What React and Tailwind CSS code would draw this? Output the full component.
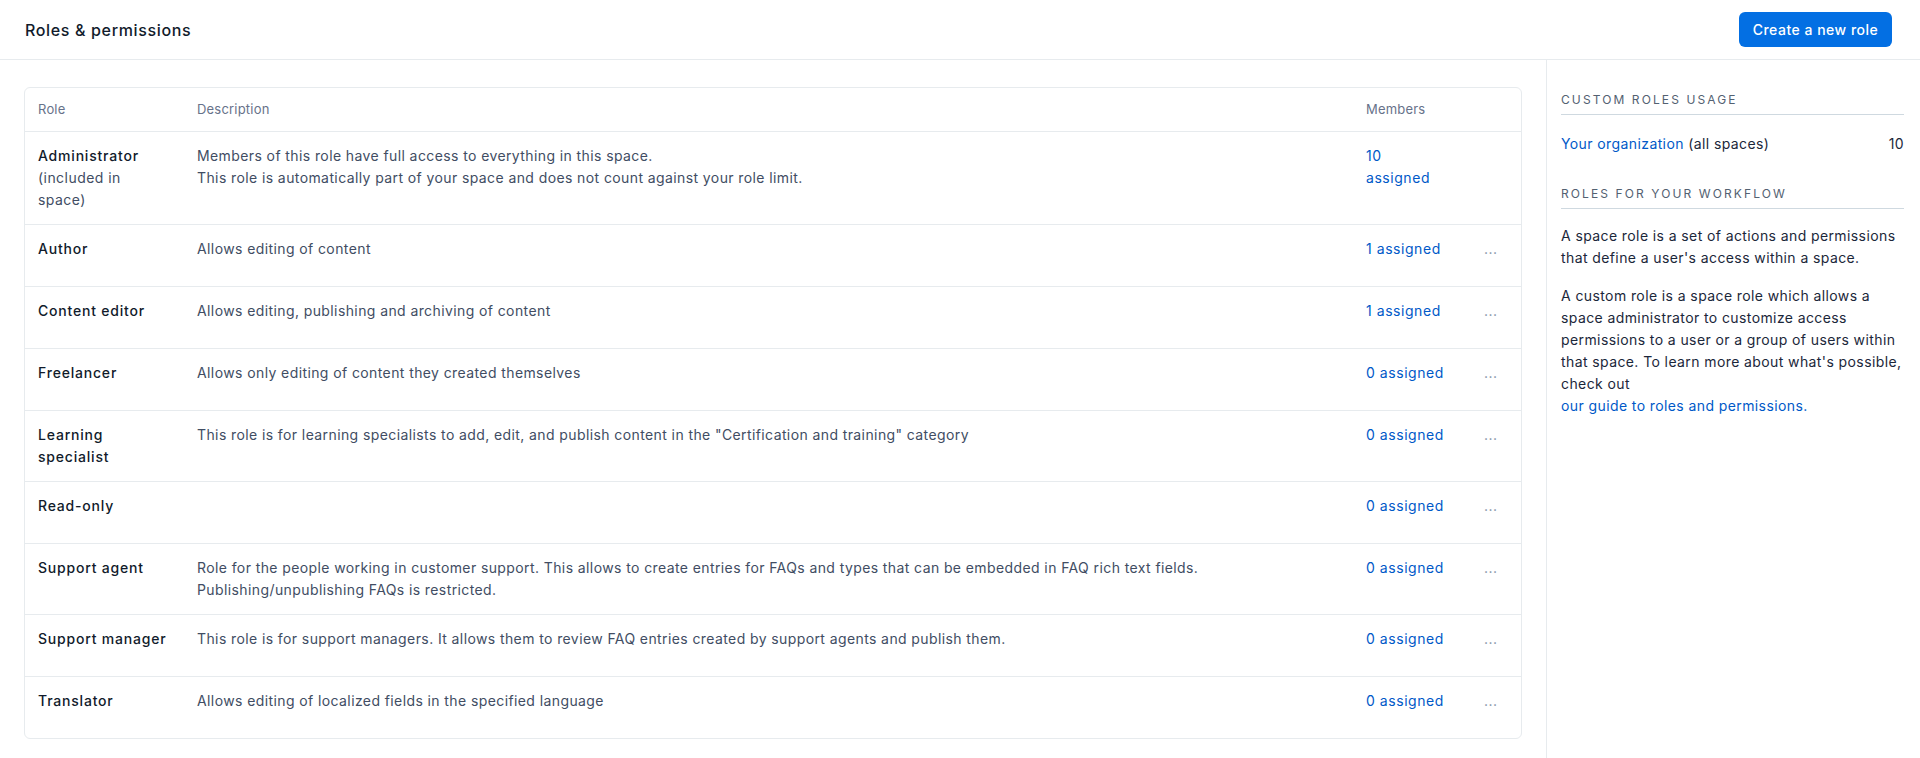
import React from 'react';

const roles = [
  {
    name: (
      <>
        Administrator
        <br />
        <span className="font-normal tracking-[0.45px] text-[#414D63]">(included in</span>
        <br />
        <span className="font-normal tracking-[0.45px] text-[#414D63]">space)</span>
      </>
    ),
    description: (
      <>
        Members of this role have full access to everything in this space.
        <br />
        This role is automatically part of your space and does not count against your role limit.
      </>
    ),
    members: (
      <>
        10
        <br />
        assigned
      </>
    ),
    actions: false,
  },
  { name: 'Author', description: 'Allows editing of content', members: '1 assigned', actions: true },
  {
    name: 'Content editor',
    description: 'Allows editing, publishing and archiving of content',
    members: '1 assigned',
    actions: true,
  },
  {
    name: 'Freelancer',
    description: 'Allows only editing of content they created themselves',
    members: '0 assigned',
    actions: true,
  },
  {
    name: (
      <>
        Learning
        <br />
        specialist
      </>
    ),
    description:
      'This role is for learning specialists to add, edit, and publish content in the "Certification and training" category',
    members: '0 assigned',
    actions: true,
  },
  { name: 'Read-only', description: '', members: '0 assigned', actions: true },
  {
    name: 'Support agent',
    description: (
      <>
        Role for the people working in customer support. This allows to create entries for FAQs and types that can be
        embedded in FAQ rich text fields.
        <br />
        Publishing/unpublishing FAQs is restricted.
      </>
    ),
    members: '0 assigned',
    actions: true,
  },
  {
    name: 'Support manager',
    description:
      'This role is for support managers. It allows them to review FAQ entries created by support agents and publish them.',
    members: '0 assigned',
    actions: true,
  },
  {
    name: 'Translator',
    description: 'Allows editing of localized fields in the specified language',
    members: '0 assigned',
    actions: true,
  },
];

const RoleRow = ({ role }) => (
  <div className="flex py-[13px] text-sm leading-[22px]">
    <div className="w-[158px] shrink-0 pl-[13px] pr-[10px] font-medium tracking-[0.8px] text-[#111B2B] whitespace-nowrap">
      {role.name}
    </div>
    <div className="flex-1 px-[14px] tracking-[0.4px] text-[#414D63]">{role.description}</div>
    <div className="w-[115px] shrink-0 pl-[14px] pr-2 tracking-[0.55px]">
      <a href="#" className="text-[#0059C8]">
        {role.members}
      </a>
    </div>
    <div className="w-[54px] shrink-0 min-h-[35px] pl-[17px]">
      {role.actions && (
        <button type="button" className="text-[#8091A5] leading-[22px] tracking-[0.5px]">
          ...
        </button>
      )}
    </div>
  </div>
);

const SideHeading = ({ children, className = '' }) => (
  <h3
    className={`text-[12px] leading-4 tracking-[2.1px] uppercase text-[#536171] pb-[6px] border-b border-[#cfd9e0] ${className}`}
  >
    {children}
  </h3>
);

export default function App() {
  return (
    <div
      className="w-full h-[758px] bg-white flex flex-col text-[#111B2B] overflow-hidden"
      style={{ fontFamily: 'Inter, "Noto Sans", sans-serif' }}
    >
      {/* top bar */}
      <header className="h-[60px] shrink-0 border-b border-[#e7ebee] flex items-center justify-between pl-[25px] pr-[28px]">
        <h1 className="text-base font-medium tracking-[0.65px] text-[#111B2B]">Roles &amp; permissions</h1>
        <button
          type="button"
          className="w-[153px] h-[35px] rounded-md bg-[#036FE3] text-white text-sm font-medium tracking-[0.5px] flex items-center justify-center"
        >
          Create a new role
        </button>
      </header>

      <div className="flex flex-1 min-h-0">
        {/* roles table */}
        <main className="flex-1 pl-6 pr-6 pt-[27px]">
          <div className="border border-[#e7ebee] rounded-md bg-white">
            <div className="flex items-center h-[44px] border-b border-[#e7ebee] text-[13px] tracking-[0.2px] text-[#67728A]">
              <div className="w-[158px] shrink-0 pl-[13px]">Role</div>
              <div className="flex-1 px-[14px]">Description</div>
              <div className="w-[115px] shrink-0 pl-[14px]">Members</div>
              <div className="w-[54px] shrink-0" />
            </div>
            <div className="divide-y divide-[#e7ebee]">
              {roles.map((role, index) => (
                <RoleRow key={index} role={role} />
              ))}
            </div>
          </div>
        </main>

        {/* sidebar */}
        <aside className="w-[374px] shrink-0 border-l border-[#e7ebee] pl-[14px] pr-4 pt-8 text-sm leading-[22px] tracking-[0.4px]">
          <SideHeading>Custom roles usage</SideHeading>
          <div className="mt-[18px] flex justify-between text-[#1B273A]">
            <span>
              <a href="#" className="text-[#0059C8]">
                Your organization
              </a>{' '}
              (all spaces)
            </span>
            <span>10</span>
          </div>

          <SideHeading className="mt-[31px]">Roles for your workflow</SideHeading>
          <div className="mt-4 text-[#1B273A]">
            <p className="mb-4">
              A space role is a set of actions and permissions
              <br />
              that define a user's access within a space.
            </p>
            <p>
              A custom role is a space role which allows a
              <br />
              space administrator to customize access
              <br />
              permissions to a user or a group of users within
              <br />
              that space. To learn more about what's possible,
              <br />
              check out
              <br />
              <a href="#" className="text-[#0059C8]">
                our guide to roles and permissions.
              </a>
            </p>
          </div>
        </aside>
      </div>
    </div>
  );
}
